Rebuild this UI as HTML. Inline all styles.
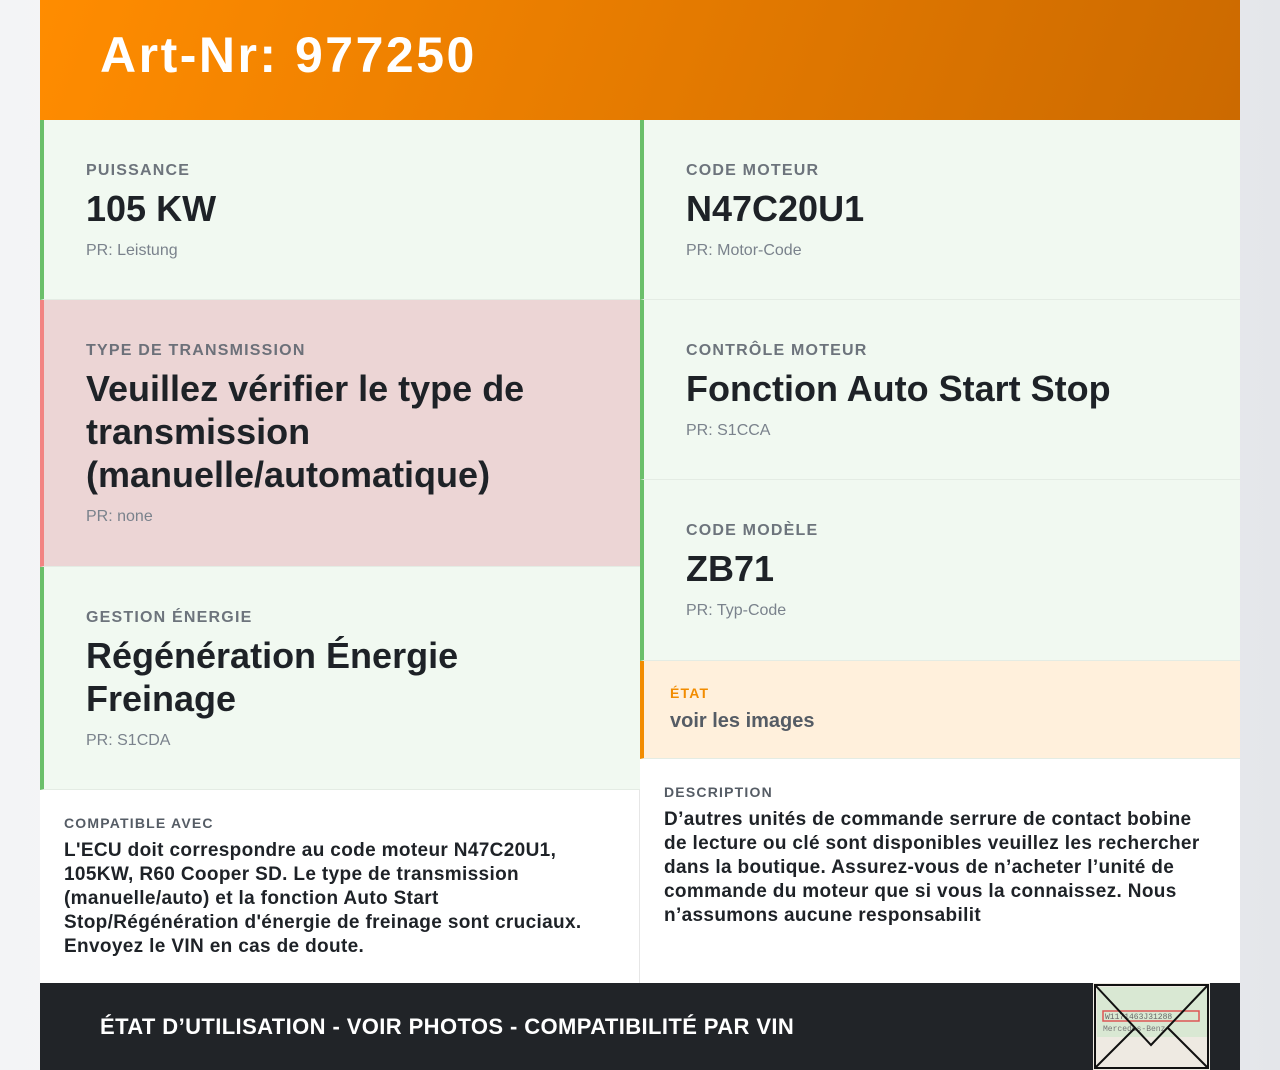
<!DOCTYPE html><html><head><meta charset="utf-8"><style>
*{margin:0;padding:0;box-sizing:border-box}
body{width:1280px;height:1070px;background:linear-gradient(90deg,#f3f4f6,#fafafa 50%,#e4e6ea);font-family:"Liberation Sans",Arial,sans-serif;position:relative;overflow:hidden}
.c{position:absolute;left:40px;top:0;width:1200px;height:1070px;background:#fff}
.hd{position:absolute;left:0;top:0;width:1200px;height:120px;background:linear-gradient(110deg,#ff8c00,#cc6a00)}
.hd h1{position:absolute;left:60px;top:26px;color:#fff;font-size:50px;font-weight:bold;letter-spacing:2.5px}
.cell{position:absolute;background:#f1f9f1;border-left:4px solid #6abf69;border-bottom:1px solid #e4ece4;padding-left:42px;padding-right:60px}
.lb{font-size:16px;letter-spacing:1.2px;color:#5f6670;font-weight:bold;text-transform:uppercase;opacity:.9}
.v{font-size:36px;font-weight:bold;color:#1e2227;line-height:43px;margin-top:7px}
.pr{font-size:16px;color:#7a828c;margin-top:12px}
.ft{position:absolute;left:0;top:983px;width:1200px;height:87px;background:#212428}
.ft span{position:absolute;left:60px;top:31px;color:#fff;font-size:22px;font-weight:bold;letter-spacing:.4px}
.sm{font-size:14px;letter-spacing:1.2px;color:#555c65;font-weight:bold}
.tx{font-size:19px;font-weight:bold;color:#1e2227;line-height:24px;margin-top:8px;letter-spacing:.35px}
</style></head><body><div class="c">
<div class="hd"><h1>Art-Nr: 977250</h1></div>
<div class="cell" style="left:0;top:120px;width:600px;height:180px;padding-top:42px"><div class="lb">Puissance</div><div class="v">105 KW</div><div class="pr">PR: Leistung</div></div>
<div class="cell" style="left:0;top:300px;width:600px;height:267px;padding-top:42px;background:#ecd5d5;border-left-color:#f28482"><div class="lb">Type de transmission</div><div class="v">Veuillez vérifier le type de transmission (manuelle/automatique)</div><div class="pr">PR: none</div></div>
<div class="cell" style="left:0;top:567px;width:600px;height:223px;padding-top:42px"><div class="lb">Gestion énergie</div><div class="v">Régénération Énergie Freinage</div><div class="pr">PR: S1CDA</div></div>
<div class="cell" style="left:600px;top:120px;width:600px;height:180px;padding-top:42px"><div class="lb">Code moteur</div><div class="v">N47C20U1</div><div class="pr">PR: Motor-Code</div></div>
<div class="cell" style="left:600px;top:300px;width:600px;height:180px;padding-top:42px"><div class="lb">Contrôle moteur</div><div class="v">Fonction Auto Start Stop</div><div class="pr">PR: S1CCA</div></div>
<div class="cell" style="left:600px;top:480px;width:600px;height:181px;padding-top:42px"><div class="lb">Code modèle</div><div class="v">ZB71</div><div class="pr">PR: Typ-Code</div></div>
<div class="cell" style="left:600px;top:661px;width:600px;height:98px;padding-top:24px;padding-left:26px;background:#fff0dc;border-left-color:#f28c00"><div class="sm" style="color:#f28c00">ÉTAT</div><div style="font-size:20px;font-weight:bold;color:#555c65;margin-top:9px">voir les images</div></div>
<div style="position:absolute;left:24px;top:815px;width:555px"><div class="sm">COMPATIBLE AVEC</div><div class="tx">L'ECU doit correspondre au code moteur N47C20U1, 105KW, R60 Cooper SD. Le type de transmission (manuelle/auto) et la fonction Auto Start Stop/Régénération d'énergie de freinage sont cruciaux. Envoyez le VIN en cas de doute.</div></div>
<div style="position:absolute;left:599px;top:790px;width:1px;height:193px;background:#e6e6e6"></div>
<div style="position:absolute;left:624px;top:784px;width:552px"><div class="sm">DESCRIPTION</div><div class="tx" style="margin-top:8px">D’autres unités de commande serrure de contact bobine de lecture ou clé sont disponibles veuillez les rechercher dans la boutique. Assurez-vous de n’acheter l’unité de commande du moteur que si vous la connaissez. Nous n’assumons aucune responsabilit</div></div>
<div class="ft"><span>ÉTAT D’UTILISATION - VOIR PHOTOS - COMPATIBILITÉ PAR VIN</span>
<svg style="position:absolute;left:1053px;top:0" width="117" height="87" viewBox="0 0 117 87"><rect width="117" height="87" fill="#eeeae2"/><rect x="4" y="4" width="110" height="50" fill="#d9e8d3"/><rect x="10" y="28" width="96" height="10" fill="none" stroke="#d55" stroke-width="1.5"/><text x="12" y="36" font-size="8" font-family="Liberation Mono" fill="#666">W1171463J31288</text><text x="10" y="48" font-size="8" font-family="Liberation Mono" fill="#777">Mercedes-Benz</text><path d="M2 2H115V85H2Z M2 2L58 62L115 2 M2 85L42 45 M115 85L75 45" fill="none" stroke="#111" stroke-width="2"/></svg></div>
</div></body></html>
